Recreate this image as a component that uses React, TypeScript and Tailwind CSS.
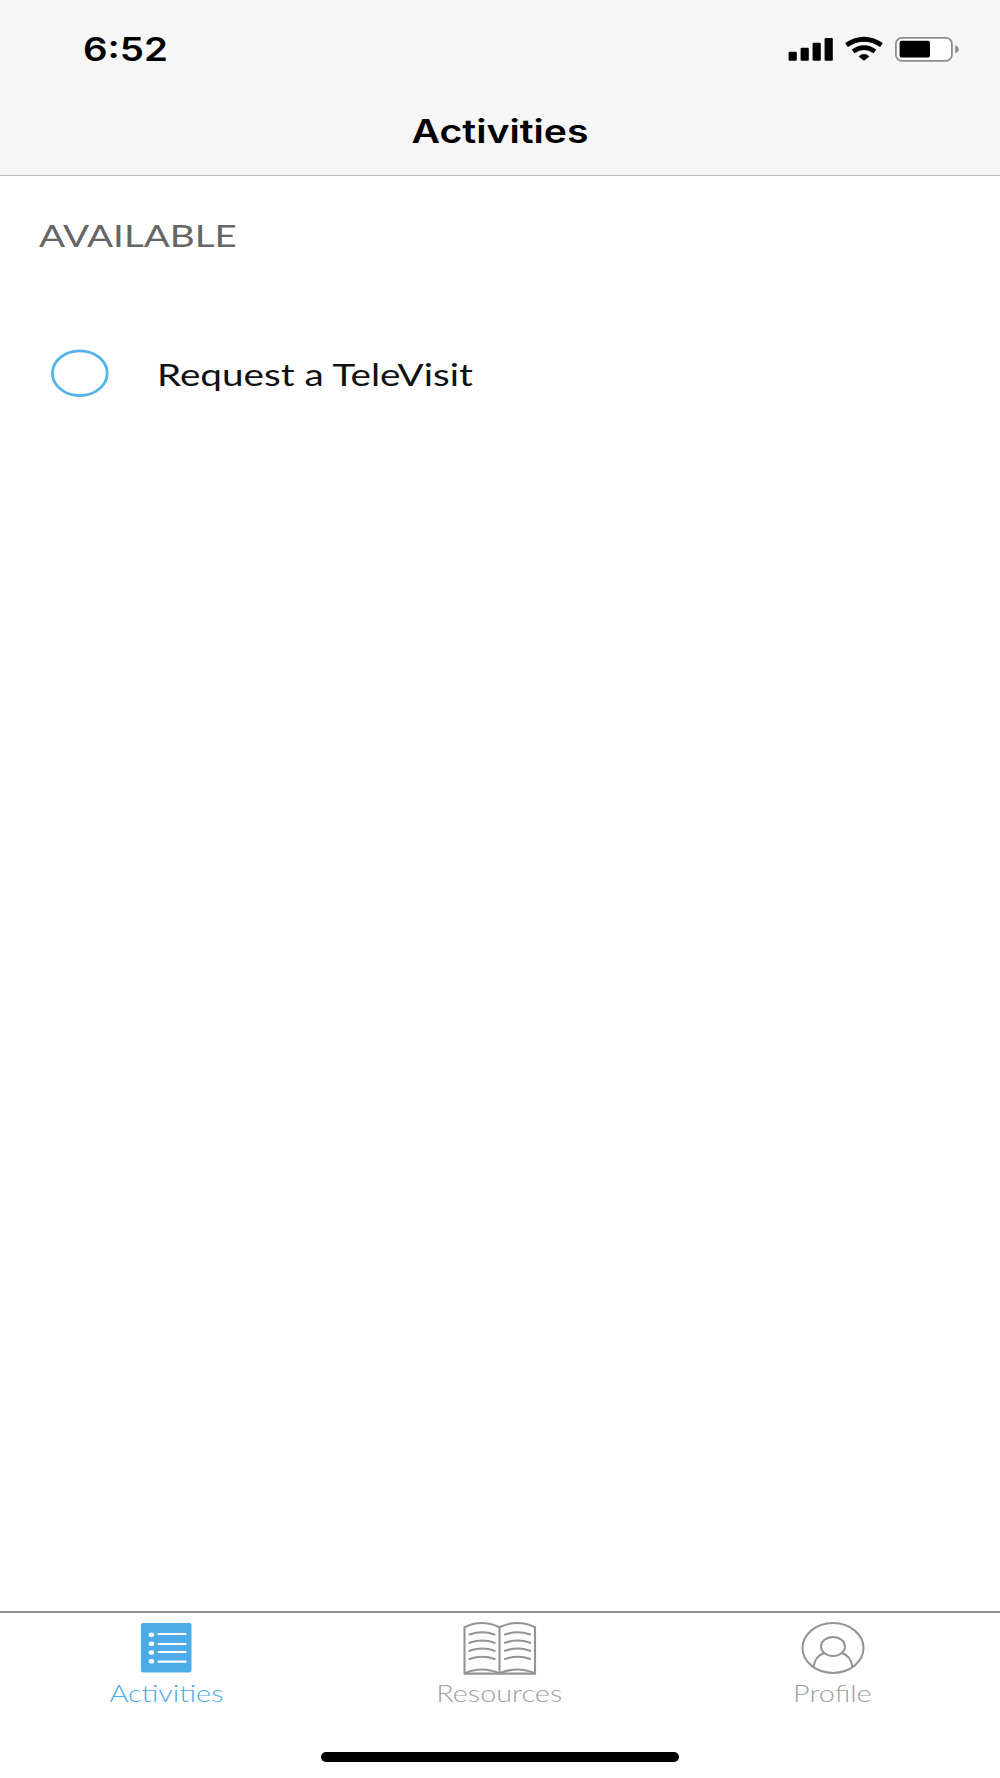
import type { ReactNode } from "react";

const StatusIcons = () => {
  return (
    <div className="flex items-start gap-3">
      <svg width="45" height="26" viewBox="0 0 45 26">
        <rect x="0.6" y="15.8" width="8.2" height="8.9" rx="1.2" />
        <rect x="12.6" y="11.8" width="8.2" height="12.9" rx="1.2" />
        <rect x="24.6" y="6.8" width="8.2" height="17.9" rx="1.2" />
        <rect x="36.6" y="2" width="8.2" height="22.7" rx="1.2" />
      </svg>
      <svg width="38" height="26" viewBox="0 0 38 26" fill="none" stroke="#000">
        <path d="M1.5 9 Q19 -2.6 36.5 9" strokeWidth="4.8" />
        <path d="M8.1 15.4 Q19 7.8 29.9 15.4" strokeWidth="4.7" />
        <path d="M13.6 20.4 Q19 15.6 24.4 20.4 L19 24.8 Z" fill="#000" stroke="none" />
      </svg>
      <svg width="64" height="27" viewBox="0 0 64 27">
        <rect x="0.9" y="1.8" width="56" height="23" rx="6" fill="#fff" stroke="#8c8c8c" strokeWidth="1.8" />
        <rect x="4.6" y="4.8" width="30.4" height="16.8" rx="2.2" />
        <path d="M60.2 9.2 Q63.8 10.6 63.8 13.2 Q63.8 15.8 60.2 17.2 Z" fill="#8c8c8c" />
      </svg>
    </div>
  );
};

const Header = () => {
  return (
    <header className="h-[176px] bg-[#f6f6f6] border-b border-[#bdbdbd] font-['Inter',sans-serif]">
      <div className="h-[100px] flex items-start justify-between pl-[83px] pr-[41px]">
        <span className="mt-[30px] text-[32px] leading-10 font-semibold origin-left scale-x-[1.2]">
          6:52
        </span>
        <div className="mt-9">
          <StatusIcons />
        </div>
      </div>
      <h1 className="mt-3 text-center text-[32px] leading-10 font-semibold scale-x-[1.225]">
        Activities
      </h1>
    </header>
  );
};

const ListIcon = () => (
  <svg width="52" height="50" viewBox="0 0 52 50">
    <rect x="0" y="0" width="50.5" height="49.5" rx="2" fill="#4dabe7" />
    <g fill="#fff">
      <ellipse cx="10.4" cy="11.8" rx="2.7" ry="2.3" />
      <ellipse cx="10.4" cy="20.7" rx="2.7" ry="2.3" />
      <ellipse cx="10.4" cy="29.5" rx="2.7" ry="2.3" />
      <ellipse cx="10.4" cy="38.3" rx="2.7" ry="2.3" />
    </g>
    <path
      d="M17.5 11h27M17.5 21h27M17.5 29h27M17.5 38.7h27"
      stroke="#fff"
      strokeWidth="2.2"
      strokeLinecap="round"
    />
  </svg>
);

const BookIcon = () => (
  <svg width="74" height="54" viewBox="0.5 -1 74 54" fill="none" stroke="#949494" strokeWidth="2.1">
    <path d="M37 5.2 Q19 -3.2 2 5.2 V51.6 H72.5 V5.2 Q55 -3.2 37 5.2 V51.6" />
    <path d="M2 51.3 Q19 43.7 37 51.3 Q55 43.7 72.5 51.3" />
    <path
      d="M7 12.5Q20 7.9 32 12.5M7 20.8Q20 16.2 32 20.8M7 28.8Q20 24.2 32 28.8M7 37Q20 32.4 32 37M42.5 12.5Q55.5 7.9 67.5 12.5M42.5 20.8Q55.5 16.2 67.5 20.8M42.5 28.8Q55.5 24.2 67.5 28.8M42.5 37Q55.5 32.4 67.5 37"
      strokeLinecap="round"
    />
  </svg>
);

const ProfileIcon = () => (
  <svg width="64" height="52" viewBox="0 0 64 52" fill="none" stroke="#949494" strokeWidth="2">
    <ellipse cx="32" cy="26" rx="30.5" ry="24.9" />
    <ellipse cx="32" cy="24.5" rx="12" ry="9.5" />
    <path d="M12.5 44.7 Q14.5 33.6 23 31.2 M41 31.2 Q49.5 33.6 51.5 44.7" />
  </svg>
);

type TabProps = {
  label: string;
  icon: ReactNode;
  color: string;
};

const Tab = ({ label, icon, color }: TabProps) => {
  return (
    <button className={`flex flex-col items-center ${color}`}>
      <span className="h-[54px] flex items-center justify-center">{icon}</span>
      <span className="mt-1 text-[23px] leading-7 font-light scale-x-[1.255]">{label}</span>
    </button>
  );
};

const App = () => {
  return (
    <div className="w-full h-[1778px] flex flex-col bg-[#fefefe] overflow-hidden font-['Lato',sans-serif]">
      <Header />
      <main className="flex-1">
        <h2 className="mt-[39px] ml-[39px] w-fit text-[31px] leading-10 text-[#666] origin-left scale-x-[1.243]">
          AVAILABLE
        </h2>
        <div className="mt-[94px] pl-[51px] flex items-center">
          <svg width="58" height="48" viewBox="0 0 58 48">
            <ellipse cx="28.8" cy="24.2" rx="27.4" ry="22.4" fill="#fff" stroke="#55b3ec" strokeWidth="2.8" />
          </svg>
          <span className="mt-0.5 ml-[48px] text-[31px] leading-10 text-[#111] origin-left scale-x-[1.247]">
            Request a TeleVisit
          </span>
        </div>
      </main>
      <nav className="h-[167px] border-t-2 border-[#909090] flex flex-col items-center">
        <div className="w-full pt-2 pr-px grid grid-cols-3">
          <Tab label="Activities" icon={<ListIcon />} color="text-[#4dabe7]" />
          <Tab label="Resources" icon={<BookIcon />} color="text-[#a0a0a0]" />
          <Tab label="Profile" icon={<ProfileIcon />} color="text-[#a0a0a0]" />
        </div>
        <div className="mt-auto mb-4 w-[358px] h-[10px] rounded-full bg-black" />
      </nav>
    </div>
  );
};

export default App;
